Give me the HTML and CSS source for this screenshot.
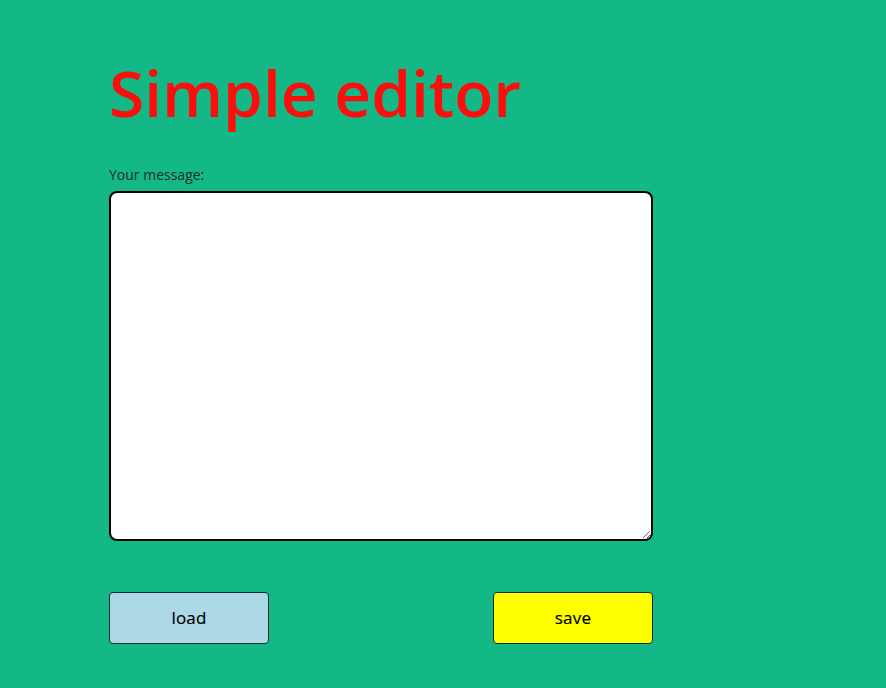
FILE: index.html
```html
<!DOCTYPE html>
<html>
<head>
<meta charset="utf-8">
<link rel="stylesheet" href="styles.css">
</head>
<body>
<main class="editor">
  <h1 class="title">Simple editor</h1>
  <label class="label" for="msg">Your message:</label>
  <textarea id="msg" class="message"></textarea>
  <div class="actions">
    <button class="btn btn-load">load</button>
    <button class="btn btn-save">save</button>
  </div>
</main>
</body>
</html>
```
FILE: styles.css
```css
html, body {
  margin: 0;
  padding: 0;
}
body {
  background: #13b886;
  font-family: "Open Sans", sans-serif;
  height: 688px;
  overflow: hidden;
}
.editor {
  width: 544px;
  padding: 49px 0 0 109px;
  display: flex;
  flex-direction: column;
}
.title {
  margin: 0;
  font-size: 64px;
  font-weight: 600;
  line-height: 88px;
  color: #ff0d0d;
}
.label {
  margin-top: 28px;
  font-size: 14px;
  line-height: 19px;
  color: #1b3029;
}
.message {
  margin-top: 7px;
  box-sizing: border-box;
  width: 544px;
  height: 350px;
  border: 2px solid #000;
  border-radius: 8px;
  background: #fff;
  resize: both;
  font-family: "Open Sans", sans-serif;
}
.actions {
  margin-top: 51px;
  display: flex;
  justify-content: space-between;
}
.btn {
  width: 160px;
  height: 52px;
  box-sizing: border-box;
  border: 1px solid #1b2b2a;
  border-radius: 4px;
  font-family: "Open Sans", sans-serif;
  font-size: 17px;
  font-weight: 400;
  letter-spacing: 0.2px;
  color: #000;
  padding: 0 0 2px;
  -webkit-text-stroke: 0.2px #000;
}
.btn-load { background: #add8e6; }
.btn-save { background: #ffff00; }
```
